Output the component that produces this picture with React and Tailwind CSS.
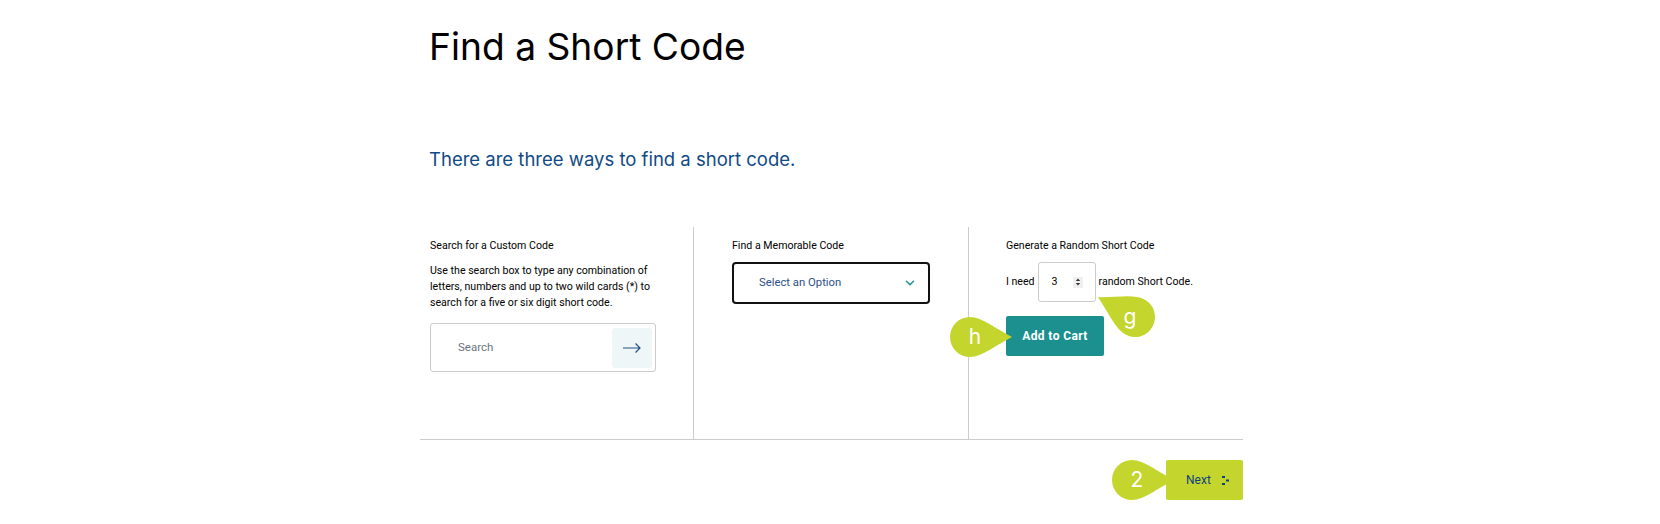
import { ChevronDown } from 'lucide-react'

// callout drop, svgClass turns the tip
function Pin({ label, className, svgClass = '', labelClass = 'pl-[10px]' }) {
  return (
    <div className={`absolute w-[62px] h-10 ${className}`}>
      <svg width="62" height="40" viewBox="0 0 62 40" className={`absolute inset-0 origin-[20px_20px] ${svgClass}`}>
        <path d="M20 0C32 0 46 12 62 20C46 28 32 40 20 40A20 20 0 0 1 20 0Z" fill="#c4d52e" />
      </svg>
      <span className={`absolute left-0 top-0 w-10 h-10 flex items-center justify-center text-white text-[21px] font-['Inter',sans-serif] ${labelClass}`}>{label}</span>
    </div>
  )
}

export default function App() {
  return (
    <div className="w-[1660px] h-[524px] bg-white overflow-hidden font-['Roboto',sans-serif]">
      <div className="w-[823px] ml-[420px]">
        <h1 className="pl-[9px] pt-[22px] text-[37.2px] leading-[50px] text-black font-['Inter',sans-serif]">Find a Short Code</h1>
        <h2 className="pl-[9px] mt-[73px] text-[18.5px] leading-7 text-[#0f4a86] font-['Inter',sans-serif]">There are three ways to find a short code.</h2>

        <div className="mt-[54px] grid grid-cols-[274px_275px_1fr] h-[213px] border-b border-[#ccc] text-black text-[10.6px]">
          <div className="pl-[10px] pt-[11px] border-r border-[#ccc]">
            <p className="leading-4">Search for a Custom Code</p>
            <p className="mt-[9px] leading-4 w-[226px]">Use the search box to type any combination of letters, numbers and up to two wild cards (*) to search for a five or six digit short code.</p>
            <div className="mt-[12px] w-[226px] h-[49px] border border-[#ccc] rounded-[3px] flex items-center justify-between pl-[27px] pr-[3px]">
              <span className="text-[#6b7480] text-[11.5px]">Search</span>
              <div className="w-10 h-10 rounded-[3px] bg-[#eef6f8] flex items-center justify-center">
                <svg width="18" height="10" viewBox="0 0 18 10" fill="none" stroke="#1f5288" strokeWidth="1.2"><path d="M0 5H17M12.5 0.5L17 5L12.5 9.5" /></svg>
              </div>
            </div>
          </div>
          <div className="pl-[38px] pt-[11px] border-r border-[#ccc]">
            <p className="leading-4">Find a Memorable Code</p>
            <div className="mt-[8px] w-[198px] h-[42px] border-2 border-[#111] rounded-[4px] flex items-center justify-between pl-[25px] pr-[11px]">
              <span className="text-[#2c4f86] text-[11.3px]">Select an Option</span>
              <ChevronDown size={14} strokeWidth={2.5} className="text-[#1c8f8f]" />
            </div>
          </div>
          <div className="relative pl-[37px] pt-[11px]">
            <p className="leading-4">Generate a Random Short Code</p>
            <div className="mt-[8px] flex items-center gap-[3px] h-10">
              <span>I need</span>
              <div className="w-[58px] h-10 border border-[#ccc] rounded-[3px] flex items-center pl-[13px]">
                <span>3</span>
                <div className="ml-[15px] w-[10px] h-[11px] bg-[#f0f0f0] flex items-center justify-center">
                  <svg width="6" height="8" viewBox="0 0 6 8" fill="#333"><path d="M3 0.5L5.2 3H.8ZM3 7.5L.8 5H5.2Z" /></svg>
                </div>
              </div>
              <span>random Short Code.</span>
            </div>
            <button className="mt-[14px] w-[98px] h-10 rounded-[2px] bg-[#1c8f8f] text-white font-bold text-[12px] tracking-[0.4px]">Add to Cart</button>
            <Pin label="g" svgClass="rotate-[-152deg]" labelClass="pr-[10px]" className="left-[146px] top-[70px]" />
            <Pin label="h" className="left-[-19px] top-[90px]" />
          </div>
        </div>

        <div className="relative mt-[20px] flex justify-end">
          <button className="w-[77px] h-10 rounded-[2px] bg-[#c4d52e] text-[#0f3f80] text-[12px] flex items-center pl-[20px] gap-[11px]">
            <span>Next</span>
            <svg width="7" height="9" viewBox="0 0 7 9" fill="#0f3f80"><rect x="0" y="0" width="3" height="2" /><rect x="0" y="7" width="3" height="2" /><rect x="4" y="3.5" width="3" height="2" /></svg>
          </button>
          <Pin label="2" className="right-[69px] top-0" />
        </div>
      </div>
    </div>
  )
}
